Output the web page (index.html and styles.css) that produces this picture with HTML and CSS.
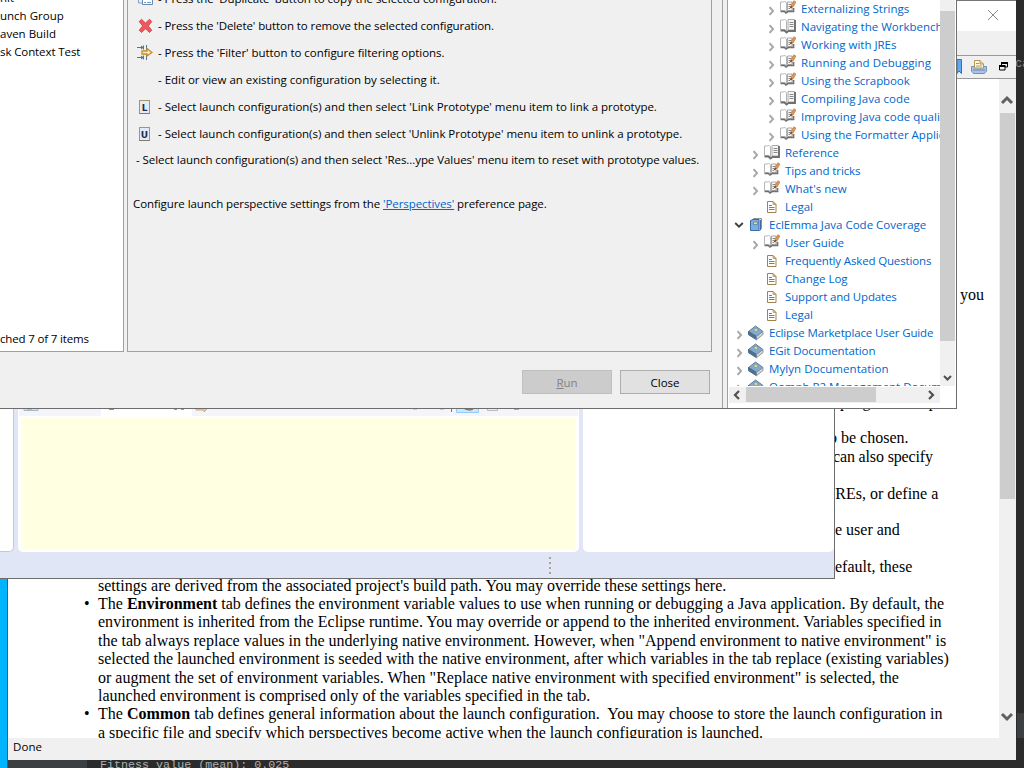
FILE: index.html
```
<!DOCTYPE html>
<html lang="en">
<head>
<meta charset="utf-8">
<title>Launch configurations</title>
<link rel="stylesheet" href="styles.css">
</head>
<body>
<svg class="defs" width="0" height="0">
  <defs>
    <symbol id="chev" viewBox="0 0 8 10"><path d="M2.500 1.2 6.1 5 2.500 8.800" fill="none" stroke="#a6a6a6" stroke-width="1.9"/></symbol>
    <symbol id="book" viewBox="0 0 16 16"><path d="M.5 2h3l1-1 2 2v10l-2-1.500h-4z" fill="#fff" stroke="#b5b5b5"/><path d="M8 1.500h6.500v10.500H8z" fill="#f6f6f6" stroke="#aaa"/><path d="M.5 12.500h4l2 2 2-1.500h6.500V2" fill="none" stroke="#707070" stroke-width="1.900"/><path d="M9.500 4.500h4M9.500 6.500h4M9.500 8.500h4" stroke="#888"/></symbol>
    <symbol id="guide" viewBox="0 0 16 16"><path d="M.5 2h3l1-1 2 2v8.500l-2-1h-4z" fill="#fff" stroke="#b5b5b5"/><path d="M7.500 2H12v8.500H7.500z" fill="#f6f6f6" stroke="#aaa"/><path d="M.5 11.500h4l1.500 1.500 2-1.500h5.500V8" fill="none" stroke="#707070" stroke-width="1.700"/><path d="M8.500 4.500h2.500M8.500 6.500h2M8.500 8.500h1.500" stroke="#888"/><path d="m10.300 7.500 1-2.500L13.700.8 16 2l-2.700 4.800z" fill="#e3964d" stroke="#b5703c" stroke-width=".6"/><path d="m10 8.500.8-2.500 1.700 1z" fill="#333"/></symbol>
    <symbol id="page" viewBox="0 0 16 16"><path d="M3.500 2.500h5.500l3 3v8H3.500z" fill="#fff" stroke="#a2824a"/><path d="M9 2.500v3h3z" fill="#e8c46a" stroke="#a2824a" stroke-width=".6"/><path d="M5 6.500h3M5 8.500h5.500M5 10.500h5.500" stroke="#6083ad"/></symbol>
    <symbol id="open" viewBox="0 0 16 16"><path d="M3.500 3.500 5.500 1.500h8v10l-2 2.500z" fill="#dfe6ef" stroke="#8a9099"/><path d="M12.500 3v10" stroke="#3d6ca5"/><path d="M2.500 3.500 5 2.500h6v11H2.500z" fill="#78aee8" stroke="#3d6ca5"/><path d="M5.500 5h4v2.500h-4z" fill="#ead894" stroke="#4d6d87" stroke-width=".6"/></symbol>
    <symbol id="closed" viewBox="0 0 16 16"><path d="m.5 6.500 7-5.500 7.500 5.500-6 5z" fill="#82abd0" stroke="#5e7f9c"/><path d="M.5 6.500v3.200l8 5v-3z" fill="#4a7399" stroke="#4c6a85"/><path d="m8.500 11.500 6.500-5v3l-6.500 5.200z" fill="#d5dade" stroke="#78858e" stroke-width=".8"/><path d="m5.500 5 2.300-1.700L10.300 5 8 6.700z" fill="#eddc92" stroke="#6f8079" stroke-width=".5"/></symbol>
  </defs>
</svg>

<div class="desktop">
  <div class="taskstrip"></div>
  <div class="console">Fitness value (mean): 0.025</div>
  <div class="sidecode">ca</div>
  <div class="sideblock"></div>

  <section class="help">
    <header class="help-title"><svg width="12" height="12" viewBox="0 0 12 12"><path d="m1 1 10 10M11 1 1 11" stroke="#888" fill="none"/></svg></header>
    <div class="help-band"></div>
    <div class="help-tools">
      <svg width="5" height="16" viewBox="0 0 5 16"><path d="M0 .5h4.500v14L2 12l-2 2.500z" fill="#5eaaf0" stroke="#2677bd"/></svg>
      <svg class="print" width="16" height="16" viewBox="0 0 16 16"><path d="M.5 7.500h15V12l-2 2.500h-11L.5 12z" fill="#a9c2e6" stroke="#7390bb"/><path d="M3.500 9V1.500H9L12.500 5v4z" fill="#fff9df" stroke="#b29655"/><path d="M9 1.500V5h3.500" fill="#e8d28c" stroke="#b29655"/><path d="M5 4.500h3M5 7h6" stroke="#ae9762"/><path d="M2 11h12" stroke="#6685b5"/></svg>
      <svg class="restore" width="9" height="9" viewBox="0 0 9 9"><path d="M2.500 4V1h6v4H6M.5 4h5.500v4H.5z" fill="none" stroke="#000"/><path d="M2 1h7M0 4h6.500" stroke="#000" stroke-width="2"/></svg>
    </div>
    <div class="help-main">
      <div class="doc">
        <p class="ln you">you</p>
        <p class="ln f0">program setup</p>
        <p class="ln">&nbsp;</p>
        <p class="ln f1">o be chosen.</p>
        <p class="ln f2">can also specify</p>
        <p class="ln">&nbsp;</p>
        <p class="ln f3">JREs, or define a</p>
        <p class="ln">&nbsp;</p>
        <p class="ln f4">he user and</p>
        <p class="ln">&nbsp;</p>
        <p class="ln f5">default, these</p>
        <p class="ln wide">settings are derived from the associated project's build path. You may override these settings here.</p>
        <ul class="tabs">
          <li>The <b>Environment</b> tab defines the environment variable values to use when running or debugging a Java application. By default, the<br><span class="wide">environment is inherited from the Eclipse runtime. You may override or append to the inherited environment. Variables specified in</span><br>the tab always replace values in the underlying native environment. However, when "Append environment to native environment" is<br>selected the launched environment is seeded with the native environment, after which variables in the tab replace (existing variables)<br>or augment the set of environment variables. When "Replace native environment with specified environment" is selected, the<br>launched environment is comprised only of the variables specified in the tab.</li>
          <li><span class="wide">The <b>Common</b> tab defines general information about the launch configuration.&nbsp; You may choose to store the launch configuration in</span><br>a specific file and specify which perspectives become active when the launch configuration is launched.</li>
        </ul>
      </div>
      <div class="doc-scroll">
        <svg width="16" height="34" viewBox="0 0 16 34"><path d="m3 24 5-5 5 5" fill="none" stroke="#606060" stroke-width="3"/></svg>
        <div class="doc-thumb"></div>
        <svg class="down" width="16" height="34" viewBox="0 0 16 34"><path d="m3 10 5 5 5-5" fill="none" stroke="#606060" stroke-width="3"/></svg>
      </div>
    </div>
    <footer class="status">Done</footer>
  </section>

  <section class="ide">
    <div class="ide-panes">
      <div class="pane-left"></div>
      <div class="pane-mid">
        <div class="tabbar">
          <svg width="564" height="9" viewBox="0 0 564 9"><path fill="#fff" d="M82 0h91v9H82z"/><path d="M5-1v2.500h14V-1" fill="#d8e2ee" stroke="#a5b9cf"/><path d="M8-1h5v2H8z" fill="#e4b75f"/><path d="M90 .5h5" stroke="#59a4c7"/><path d="M155 .5h3m4 0h3" stroke="#999"/><path d="M177-1v2h8v2l4-4" fill="#edcf98" stroke="#d8ab68"/><path d="M394 .5h4m23 0h4" stroke="#ccc"/><path d="M432.500 0v3" stroke="#777"/><path d="M437.500-2h22v5.500h-22z" fill="#cce6ff" stroke="#91cbfb"/><path d="m446 0 5 1 3-1" fill="none" stroke="#a97625" stroke-width="1.500"/><path d="M468.500-2h10v3.500h-10z" fill="#eee" stroke="#bbb"/><path d="M495 .5h5" stroke="#aaa"/></svg>
        </div>
        <div class="yellow"></div>
      </div>
      <div class="pane-right"></div>
    </div>
    <div class="ide-status"><i></i><i></i><i></i><i></i></div>
  </section>

  <section class="dialog">
    <div class="dlg-main">
      <div class="panels">
        <div class="types">
          <div class="t t0">nit</div>
          <div class="t t1">unch Group</div>
          <div class="t t2">aven Build</div>
          <div class="t t3">sk Context Test</div>
          <div class="t matched">ched 7 of 7 items</div>
        </div>
        <div class="info">
          <div class="row"><svg width="16" height="16" viewBox="0 0 16 16"><path d="M1.500 1h9v11h-9z" fill="#e8edf3" stroke="#8aa0b9"/><path d="M5.500 4h10v9.500h-10z" fill="#fff" stroke="#6889b4"/><path d="M7 8.500h2m1 0h4M7 11.500h2m1 0h4" stroke="#759ac6"/></svg><span class="w0">- Press the 'Duplicate' button to copy the selected configuration.</span></div>
          <div class="row"><svg width="16" height="16" viewBox="0 0 16 16"><path d="M2.200 3.600 4.500 1.300 8.500 5l4-3.700 2.300 2.300L11.300 8l3.500 4.200-2.300 2.300-4-3.700-4 3.700-2.300-2.300L5.700 8z" fill="#ed5960" stroke="#cf3740" stroke-width=".8"/></svg><span class="w1">- Press the 'Delete' button to remove the selected configuration.</span></div>
          <div class="row"><svg width="16" height="16" viewBox="0 0 16 16"><path d="M0 2.500h7M0 12.500h7M9.500 0v5M9.500 10v5M6.500.5v4M6.500 10.500v4" stroke="#477c99" fill="none"/><path d="m4 .5 3 2-3 2m0 6 3 2-3 2" fill="#477c99"/><path d="M5 6h5V3.500L15 7.500l-5 3.500V9H5z" fill="#fff0b9" stroke="#c48a2b" stroke-width="1.300"/></svg><span class="w2">- Press the 'Filter' button to configure filtering options.</span></div>
          <div class="row"><i class="blank"></i><span class="w3">- Edit or view an existing configuration by selecting it.</span></div>
          <div class="row"><b class="box">L</b><span class="w4">- Select launch configuration(s) and then select 'Link Prototype' menu item to link a prototype.</span></div>
          <div class="row"><b class="box">U</b><span class="w5">- Select launch configuration(s) and then select 'Unlink Prototype' menu item to unlink a prototype.</span></div>
          <div class="row reset"><span class="w6">- Select launch configuration(s) and then select 'Res...ype Values' menu item to reset with prototype values.</span></div>
          <div class="row persp"><span class="w7">Configure launch perspective settings from the <a>'Perspectives'</a> preference page.</span></div>
        </div>
      </div>
      <div class="buttons"><div class="btn off"><span><u>R</u>un</span></div><div class="btn"><span>Close</span></div></div>
    </div>
    <div class="helpview">
      <div class="view-row">
        <div class="tree">
          <div class="node l3"><svg class="c"><use href="#chev"/></svg><svg class="i"><use href="#guide"/></svg><span>Externalizing Strings</span></div>
          <div class="node l3"><svg class="c"><use href="#chev"/></svg><svg class="i"><use href="#book"/></svg><span>Navigating the Workbench</span></div>
          <div class="node l3"><svg class="c"><use href="#chev"/></svg><svg class="i"><use href="#guide"/></svg><span>Working with JREs</span></div>
          <div class="node l3"><svg class="c"><use href="#chev"/></svg><svg class="i"><use href="#guide"/></svg><span class="loose">Running and Debugging</span></div>
          <div class="node l3"><svg class="c"><use href="#chev"/></svg><svg class="i"><use href="#guide"/></svg><span class="snug">Using the Scrapbook</span></div>
          <div class="node l3"><svg class="c"><use href="#chev"/></svg><svg class="i"><use href="#book"/></svg><span class="loose">Compiling Java code</span></div>
          <div class="node l3"><svg class="c"><use href="#chev"/></svg><svg class="i"><use href="#guide"/></svg><span class="loose">Improving Java code quality</span></div>
          <div class="node l3"><svg class="c"><use href="#chev"/></svg><svg class="i"><use href="#guide"/></svg><span>Using the Formatter Application</span></div>
          <div class="node l2"><svg class="c"><use href="#chev"/></svg><svg class="i"><use href="#book"/></svg><span>Reference</span></div>
          <div class="node l2"><svg class="c"><use href="#chev"/></svg><svg class="i"><use href="#guide"/></svg><span class="snug">Tips and tricks</span></div>
          <div class="node l2"><svg class="c"><use href="#chev"/></svg><svg class="i"><use href="#guide"/></svg><span>What's new</span></div>
          <div class="node l2"><i class="c"></i><svg class="i pg"><use href="#page"/></svg><span>Legal</span></div>
          <div class="node l1"><svg class="c exp" viewBox="0 0 10 10"><path d="m1.200 3 3.800 3.700L8.800 3" fill="none" stroke="#404040" stroke-width="1.900"/></svg><svg class="i pg"><use href="#open"/></svg><span>EclEmma Java Code Coverage</span></div>
          <div class="node l2"><svg class="c"><use href="#chev"/></svg><svg class="i"><use href="#guide"/></svg><span class="snug">User Guide</span></div>
          <div class="node l2"><i class="c"></i><svg class="i pg"><use href="#page"/></svg><span class="tight">Frequently Asked Questions</span></div>
          <div class="node l2"><i class="c"></i><svg class="i pg"><use href="#page"/></svg><span>Change Log</span></div>
          <div class="node l2"><i class="c"></i><svg class="i pg"><use href="#page"/></svg><span class="tight">Support and Updates</span></div>
          <div class="node l2"><i class="c"></i><svg class="i pg"><use href="#page"/></svg><span>Legal</span></div>
          <div class="node l1"><svg class="c"><use href="#chev"/></svg><svg class="i pg"><use href="#closed"/></svg><span class="tight">Eclipse Marketplace User Guide</span></div>
          <div class="node l1"><svg class="c"><use href="#chev"/></svg><svg class="i pg"><use href="#closed"/></svg><span class="snug">EGit Documentation</span></div>
          <div class="node l1"><svg class="c"><use href="#chev"/></svg><svg class="i pg"><use href="#closed"/></svg><span class="loose">Mylyn Documentation</span></div>
          <div class="node l1"><svg class="c"><use href="#chev"/></svg><svg class="i pg"><use href="#closed"/></svg><span>Oomph P2 Management Documentation</span></div>
        </div>
        <div class="vscroll"><div class="vthumb"></div><svg width="15" height="17" viewBox="0 0 15 17"><path d="m4 7 3.500 3.500L11 7" fill="none" stroke="#505050" stroke-width="2"/></svg></div>
      </div>
      <div class="hscroll"><svg width="17" height="16" viewBox="0 0 17 16"><path d="M10 4 6 8l4 4" fill="none" stroke="#505050" stroke-width="2.200"/></svg><div class="hthumb"></div><svg class="right" width="17" height="16" viewBox="0 0 17 16"><path d="m6 4 4 4-4 4" fill="none" stroke="#505050" stroke-width="2.200"/></svg></div>
    </div>
  </section>
</div>
</body>
</html>
```
FILE: styles.css
```
* { box-sizing: border-box; }
body { margin: 0; font: 11.5px/18px "Open Sans", "Noto Sans", sans-serif; color: #000; }
p, ul { margin: 0; padding: 0; }
svg { display: block; flex: none; }
.defs { position: absolute; }
.desktop { position: relative; width: 1024px; height: 768px; overflow: hidden; background: #2b2b2b; }
.taskstrip { position: absolute; left: 0; top: 578px; width: 8px; height: 190px; background: #00b4ff; border-right: 1px solid #28608a; }
.console { position: absolute; left: 8px; top: 760px; width: 1016px; height: 8px; padding-left: 92px; overflow: hidden; background: linear-gradient(90deg, #3c3f41 79px, #2b2b2b 79px); color: #a9b0b5; font: 11.7px/11px "Liberation Mono", monospace; }
.sidecode { position: absolute; left: 1015px; top: 58px; color: #8b8b8b; font: 12px/13px "Liberation Mono", monospace; }
.sideblock { position: absolute; left: 1017px; top: 713px; width: 7px; height: 25px; background: #3c3f41; }

/* Help browser window */
.help { position: absolute; left: 8px; top: 0; width: 1008px; height: 760px; background: #fff; display: flex; flex-direction: column; }
.help-title { height: 31px; padding: 8px 0 0 979px; border-top: 1px solid #777; }
.help-band { height: 25px; background: #f0f0f0; border-bottom: 1px solid #999; }
.help-tools { height: 23px; padding: 3px 8px 0 0; background: #f0f0f0; border-bottom: 1px solid #999; display: flex; justify-content: flex-end; }
.print { margin-left: 9px; }
.restore { margin: 3px 0 0 12px; }
.help-main { display: flex; height: 659px; }
.doc { width: 991px; height: 659px; padding: 207px 0 0 90px; overflow: hidden; font: 16px/18.4px "Liberation Serif", serif; white-space: nowrap; }
.you { padding-left: 862px; margin-bottom: 88.1px; }
.f0 { padding-left: 742px; letter-spacing: 0.4px; }
.f1 { padding-left: 731px; }
.f2 { padding-left: 735px; letter-spacing: -0.15px; }
.f3 { padding-left: 731px; }
.f4 { padding-left: 729px; }
.f5 { padding-left: 729px; }
.wide { letter-spacing: 0.02px; }
.tabs { list-style: none; }
.tabs li::before { content: "•"; float: left; margin-left: -14px; }
.doc-scroll { width: 17px; background: #f0f0f0; display: flex; flex-direction: column; }
.doc-thumb { width: 15px; height: 386px; margin-left: 1px; background: #cdcdcd; }
.down { margin-top: auto; }
.status { height: 22px; background: #f0f0f0; padding-left: 5px; line-height: 17px; letter-spacing: 0.1px; }

/* Workbench window behind the dialog */
.ide { position: absolute; left: 0; top: 409px; width: 835px; height: 170px; background: #e1e6f6; border: solid #6d6d6d; border-width: 0 1px 1px 0; }
.ide-panes { display: flex; height: 143px; }
.pane-left { width: 14px; background: #fff; border: solid #c6c8d2; border-width: 0 1px 1px 0; border-radius: 0 0 5px 0; }
.pane-mid { width: 561px; margin-left: 4px; background: #fff; border-radius: 0 0 5px 5px; padding: 0 3px 2px 3px; display: flex; flex-direction: column; }
.tabbar { height: 7px; margin: 0 -2px 2px -2px; overflow: hidden; background: #f4f5fb; }
.yellow { flex: 1; background: #ffffe1; }
.pane-right { width: 251px; margin-left: 4px; background: #fff; border-radius: 0 0 5px 5px; }
.ide-status { display: flex; flex-direction: column; gap: 3px; padding: 5px 0 0 549px; }
.ide-status i { width: 2px; height: 2px; background: #aaa391; }

/* Run configurations dialog */
.dialog { position: absolute; left: 0; top: 0; width: 957px; height: 409px; background: #f0f0f0; border: solid #6d6d6d; border-width: 0 1px 1px 0; display: flex; }
.dlg-main { width: 723px; border-right: 1px solid #a0a0a0; }
.panels { display: flex; gap: 3px; height: 352px; }
.types { width: 124px; background: #fff; border: solid #a0a0a0; border-width: 0 1px 1px 0; display: flex; flex-direction: column; overflow: hidden; white-space: nowrap; }
.t { height: 18px; line-height: 18px; }
.t0 { margin-top: -11px; }
.t3 { letter-spacing: -0.1px; }
.matched { margin: auto 0 3px; letter-spacing: -0.16px; }
.info { width: 585px; border: solid #a0a0a0; border-width: 0 1px 1px; padding: 0 0 0 8px; overflow: hidden; white-space: nowrap; }
.row { display: flex; height: 27px; align-items: center; gap: 6px; }
.row:first-child { margin-top: -15px; }
.row svg { margin: 0 -1px 0 1px; }
.w0 { letter-spacing: -0.05px; }
.w1 { letter-spacing: -0.09px; }
.w2 { letter-spacing: -0.04px; }
.w3, .w4 { letter-spacing: -0.02px; }
.w5 { letter-spacing: -0.03px; }
.w6 { letter-spacing: -0.065px; }
.w7 { letter-spacing: -0.08px; }
.blank { width: 16px; }
.box { width: 11px; height: 14px; margin: 1px 2px 0 3px; border: 1px solid #a3995f; border-bottom-color: #7f7b6c; background: #e2ebfa; color: #1c2b40; font: bold 9px/14px "DejaVu Sans", sans-serif; text-align: center; }
.reset { height: 25px; }
.persp { margin: 18px 0 0 -3px; }
a { color: #0066cc; text-decoration: underline; }
.buttons { display: flex; justify-content: flex-end; gap: 8px; padding: 18px 12px 0 0; }
.btn { width: 90px; height: 24px; border: 1px solid #adadad; background: #e1e1e1; text-align: center; line-height: 23px; }
.off { color: #838383; background: #ccc; border-color: #bfbfbf; }

.helpview { width: 229px; margin-left: 4px; border-left: 1px solid #a0a0a0; background: #fff; }
.view-row { display: flex; height: 386px; }
.tree { width: 212px; overflow: hidden; white-space: nowrap; color: #0066cc; }
.node { display: flex; height: 18px; align-items: center; }
.node > * { flex: none; }
.tight { letter-spacing: -0.15px; }
.snug { letter-spacing: -0.1px; }
.loose { letter-spacing: 0.07px; }
.c { width: 8px; height: 10px; margin: 3px 5px 0 0; }
.exp { width: 10px; margin: 0 4px 0 -1px; }
.i { width: 16px; height: 16px; margin: -3px 5px 0 0; }
.pg { margin-top: 0; }
.l1 { padding-left: 7px; }
.l2 { padding-left: 23px; }
.l3 { padding-left: 39px; }
.vscroll { width: 15px; background: #f0f0f0; display: flex; flex-direction: column; }
.vthumb { height: 331px; margin-top: 11px; background: #cdcdcd; }
.vscroll svg { margin-top: 28px; }
.hscroll { display: flex; width: 211px; height: 16px; margin: 1px 0 0 1px; background: #f0f0f0; }
.hthumb { width: 130px; height: 15px; background: #cdcdcd; }
.right { margin-left: auto; }
```
